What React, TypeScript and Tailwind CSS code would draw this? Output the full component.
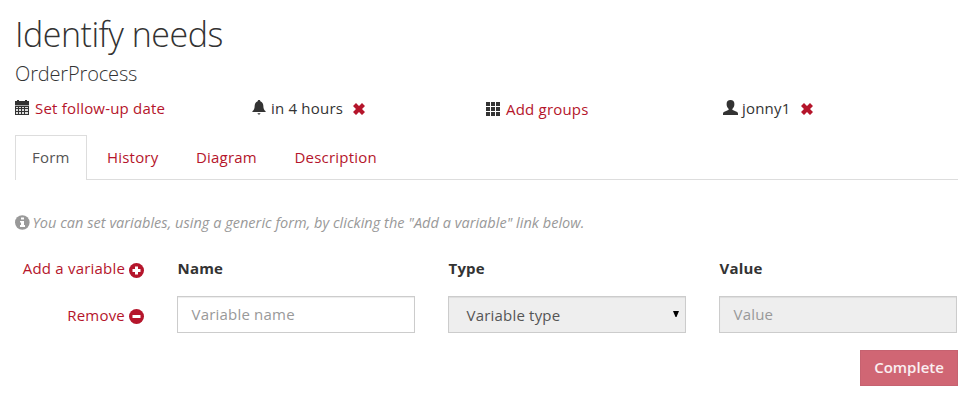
import type { ReactNode } from 'react';

type IconProps = { className?: string };

const CalendarIcon = () => (
  <svg viewBox="0 0 14 15" className="h-[15px] w-[14px] shrink-0" fill="#333" shapeRendering="crispEdges">
    <path d="M0 1h2V0h2v1h6V0h2v1h2v4H0z" />
    <path d="M0 6h14v9H0z" />
    <path d="M0 5h14v1H0z" fill="#aaa" />
    <path d="M1 7h2v1H1zM4 7h2v1H4zM7 7h2v1H7zM10 7h3v1h-3zM1 9h2v2H1zM4 9h2v2H4zM7 9h2v2H7zM10 9h3v2h-3zM1 12h2v2H1zM4 12h2v2H4zM7 12h2v2H7zM10 12h3v2h-3z" fill="#ddd" />
  </svg>
);

const BellIcon = () => (
  <svg viewBox="0 0 14 15" className="mt-px h-[15px] w-[14px] shrink-0" fill="#333">
    <path d="M7 0c.8 0 1.300.5 1.300 1.200 2 .7 2.900 2.300 3 4.300.1 3 .6 4.300 2.300 5.700V12H.4v-.8c1.700-1.400 2.200-2.700 2.300-5.700.1-2 1-3.600 3-4.300C5.700.5 6.200 0 7 0zM5.500 13.200h3c-.2.900-.7 1.400-1.500 1.400s-1.300-.5-1.500-1.400z" />
  </svg>
);

const GridIcon = () => (
  <svg viewBox="0 0 14 14" className="h-[14px] w-[14px] shrink-0" fill="#333" shapeRendering="crispEdges">
    <path d="M0 0h4v4H0zM5 0h4v4H5zM10 0h4v4h-4zM0 5h4v4H0zM5 5h4v4H5zM10 5h4v4h-4zM0 10h4v4H0zM5 10h4v4H5zM10 10h4v4h-4z" />
  </svg>
);

const UserIcon = () => (
  <svg viewBox="0 0 15 15" className="h-[15px] w-[15px] shrink-0" fill="#333">
    <path d="M7.500 0c2.500 0 3.900 1.600 3.900 4 0 2-.7 3.600-1.900 4.700-.3.500-.3 1.100.2 1.400l3.900 1.700c.9.400 1.300 1 1.400 2v1.200H0v-1.200c.1-1 .5-1.600 1.400-2l3.900-1.700c.5-.3.500-.9.200-1.400C4.300 7.600 3.600 6 3.600 4c0-2.400 1.400-4 3.900-4z" />
  </svg>
);

const RemoveIcon = ({ className = '' }: IconProps) => (
  <svg viewBox="0 0 12 12" className={`h-3 w-3 shrink-0 ${className}`} fill="#b5152b">
    <path d="M3 0 6 3 9 0l3 3-3 3 3 3-3 3-3-3-3 3-3-3 3-3-3-3z" />
  </svg>
);

const PlusIcon = () => (
  <svg viewBox="0 0 15 15" className="h-[15px] w-[15px] shrink-0">
    <circle cx="7.500" cy="7.500" r="7.500" fill="#b5152b" />
    <path d="M6 3.500h3V6h2.500v3H9v2.500H6V9H3.500V6H6z" fill="#fff" />
  </svg>
);

const MinusIcon = () => (
  <svg viewBox="0 0 15 15" className="h-[15px] w-[15px] shrink-0">
    <circle cx="7.500" cy="7.500" r="7.500" fill="#b5152b" />
    <path d="M3.500 6h8v3h-8z" fill="#fff" />
  </svg>
);

const InfoIcon = () => (
  <svg viewBox="0 0 15 15" className="-ml-[0.500px] h-[15px] w-[15px] shrink-0">
    <circle cx="7.300" cy="7.500" r="7.300" fill="#999" />
    <path d="M6 2.500h3v2H6zM5 6h4v4h1v2H5v-2h1V7.500H5z" fill="#fff" />
  </svg>
);

const Label = ({ children }: { children: ReactNode }) => (
  <div className="w-[238px] pl-[0.500px] font-bold">{children}</div>
);

const tabs = ['History', 'Diagram', 'Description'];

export default function App() {
  return (
    <main className="h-[414px] w-[972px] bg-white pl-[15px] font-['Open_Sans',sans-serif] text-[15px] leading-[20px] tracking-[0.2px] text-[#333]">
      <h1 className="h-[62px] pt-[14px] text-[34px] font-light leading-[40px] tracking-[-0.5px]">Identify needs</h1>
      <h2 className="h-[36px] text-[20px] font-light leading-[23px] tracking-[-0.150px]">OrderProcess</h2>
      <section className="flex h-[37px]">
        <div className="flex w-[237px] gap-[6px]">
          <div className="pt-[2px]"><CalendarIcon /></div>
          <a className="text-[#b5152b]">Set follow-up date</a>
        </div>
        <div className="flex w-[234px] gap-[5px]">
          <div className="pt-px"><BellIcon /></div>
          <span>in 4 hours</span>
          <RemoveIcon className="ml-[4.500px] mt-[5px]" />
        </div>
        <div className="flex w-[236px] gap-[6px]">
          <div className="pt-[4px]"><GridIcon /></div>
          <a className="pt-px text-[#b5152b]">Add groups</a>
        </div>
        <div className="flex gap-[4px]">
          <div className="ml-[0.500px] pt-[2px]"><UserIcon /></div>
          <span className="ml-[0.500px]">jonny1</span>
          <RemoveIcon className="ml-[6.500px] mt-[5px]" />
        </div>
      </section>
      <nav className="flex h-[45px] w-[943px]">
        <div className="w-[72px] border border-b-0 border-[#ddd] pl-[16px] pt-[11px] text-[#555]">Form</div>
        <div className="flex flex-1 gap-[37.600px] border-b border-[#ddd] pl-[20px] pt-[12px] text-[#b5152b]">
          {tabs.map((tab) => <a key={tab}>{tab}</a>)}
        </div>
      </nav>
      <p className="mt-[33px] flex h-[45px] gap-[3px] text-[14.500px] italic tracking-[0.030px] text-[#999]">
        <span className="pt-[2px]"><InfoIcon /></span>
        <span>You can set variables, using a generic form, by clicking the "Add a variable" link below.</span>
      </p>
      <section className="flex h-[38px]">
        <div className="flex w-[129px] justify-end gap-[4px] text-[#b5152b]">
          <a>Add a variable</a>
          <span className="pt-[5px]"><PlusIcon /></span>
        </div>
        <div className="ml-[33px] flex gap-[33px]">
          <Label>Name</Label>
          <Label>Type</Label>
          <Label>Value</Label>
        </div>
      </section>
      <section className="flex h-[37px]">
        <div className="flex w-[129px] justify-end gap-[4px] pt-[9px] text-[#b5152b]">
          <a>Remove</a>
          <span className="pt-[4px]"><MinusIcon /></span>
        </div>
        <div className="ml-[33px] flex gap-[33px]">
          <div className="w-[238px] border border-[#ccc] pl-[13.500px] pt-[7px] text-[#999] shadow-[inset_0_1px_1px_rgba(0,0,0,0.075)]">Variable name</div>
          <div className="flex w-[238px] justify-between border border-[#ccc] bg-[#eee] pl-[17.500px] pr-[6px] pt-[8px] text-[#555] shadow-[inset_0_1px_1px_rgba(0,0,0,0.075)]">
            <span>Variable type</span>
            <svg viewBox="0 0 6 6" className="mt-[6px] h-[6px] w-[6px]" fill="#000"><path d="M0 0h6L3.500 6h-1z" /></svg>
          </div>
          <div className="w-[238px] border border-[#ccc] bg-[#eee] pl-[13.500px] pt-[7px] text-[#999] shadow-[inset_0_1px_1px_rgba(0,0,0,0.075)]">Value</div>
        </div>
      </section>
      <div className="mt-[17px] flex w-[943px] justify-end">
        <button className="h-[36px] w-[98px] border border-[#c66270] bg-[#d06674] pb-[3px] font-semibold tracking-normal text-white/90">Complete</button>
      </div>
    </main>
  );
}
